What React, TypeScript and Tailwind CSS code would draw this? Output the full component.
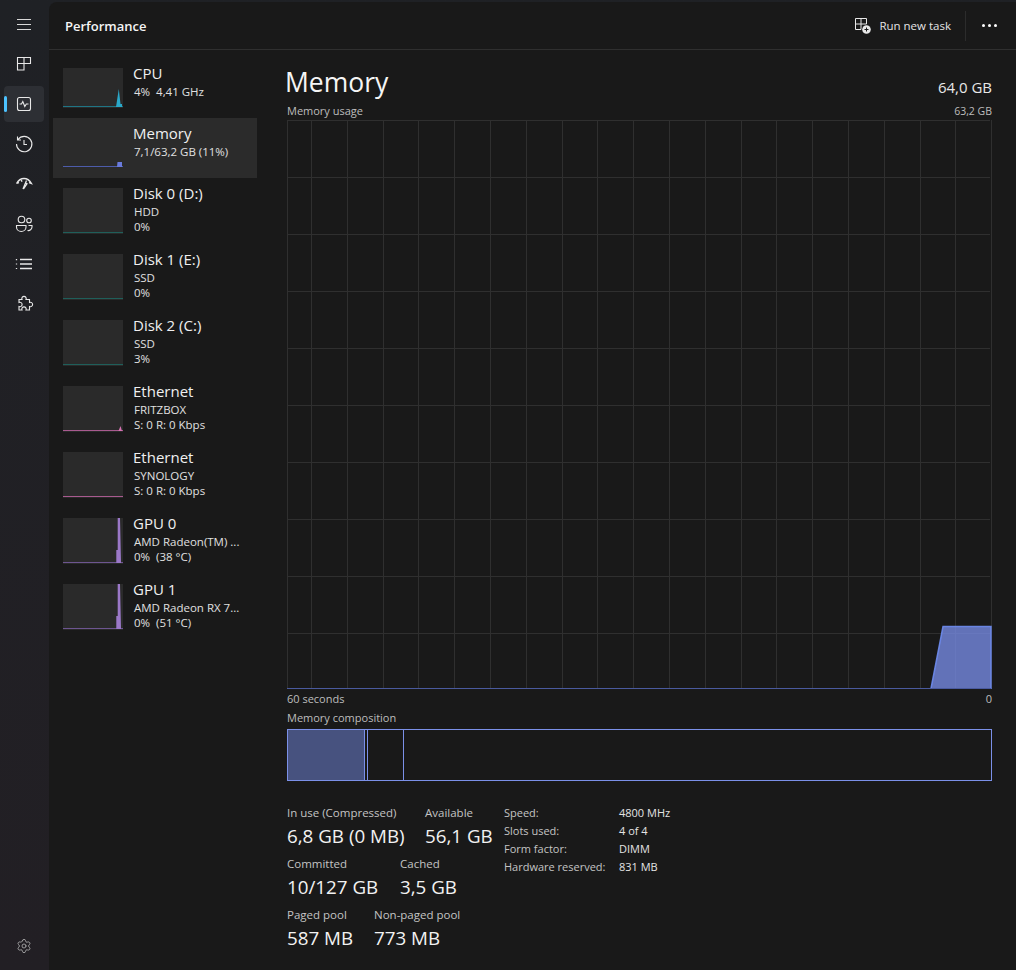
import { Settings } from 'lucide-react'

const font = { fontFamily: '"Open Sans", "Noto Sans", sans-serif' }

type Row = {
  name: string
  lines: string[]
  h: number
  color: string
  base: string
  shape?: string
  active?: boolean
}

const rows: Row[] = [
  { name: 'CPU', lines: ['4%  4,41 GHz'], h: 40, color: '#2aa8c9', base: '#1f7585', shape: '53,39 55.8,21 57.5,36 59,36 59,39' },
  { name: 'Memory', lines: ['7,1/63,2 GB (11%)'], h: 40, color: '#6a7bdc', base: '#4d5cab', shape: '54,39 54.500,34 59,34 59,39', active: true },
  { name: 'Disk 0 (D:)', lines: ['HDD', '0%'], h: 46, color: '#1f5f5a', base: '#1f5f5a' },
  { name: 'Disk 1 (E:)', lines: ['SSD', '0%'], h: 46, color: '#1f5f5a', base: '#1f5f5a' },
  { name: 'Disk 2 (C:)', lines: ['SSD', '3%'], h: 46, color: '#1f5f5a', base: '#1f5f5a' },
  { name: 'Ethernet', lines: ['FRITZBOX', 'S: 0 R: 0 Kbps'], h: 46, color: '#d873b4', base: '#a85a8f', shape: '55.500,45 57.500,40 59,45' },
  { name: 'Ethernet', lines: ['SYNOLOGY', 'S: 0 R: 0 Kbps'], h: 46, color: '#d873b4', base: '#a85a8f' },
  { name: 'GPU 0', lines: ['AMD Radeon(TM) ...', '0%  (38 °C)'], h: 46, color: '#9b78c8', base: '#6d5590', shape: '53.300,45 53.300,32 54.700,32 54.700,0 57,0 58,45' },
  { name: 'GPU 1', lines: ['AMD Radeon RX 7...', '0%  (51 °C)'], h: 46, color: '#9b78c8', base: '#6d5590', shape: '53.300,45 53.300,32 54.700,32 54.700,0 57,0 58,45' },
]

const verticals = Array.from({ length: 19 }, (_, i) => Math.round(24 + i * 35.8) + 0.5)
const horizontals = [0, 57, 114, 171, 228, 285, 342, 399, 456, 513]

function Thumb({ row }: { row: Row }) {
  return (
    <svg width={60} height={row.h} viewBox={`0 0 60 ${row.h}`} className={row.active ? 'bg-[#2b2b2b]' : 'bg-[#2a2a2a]'}>
      <rect x={0} y={row.h - 2} width={60} height={1} fill={row.base} />
      {row.shape && <polygon points={row.shape} fill={row.color} />}
    </svg>
  )
}

function NavIcon({ children, active }: { children: React.ReactNode; active?: boolean }) {
  return (
    <div className={`relative mx-[4px] my-[2px] flex h-[36px] w-[40px] items-center justify-center rounded-[4px] ${active ? 'bg-[#2d2f34]' : ''}`}>
      {active && <div className="absolute left-0 top-[10px] h-[16px] w-[3px] rounded-full bg-[#4cc2ff]" />}
      {children}
    </div>
  )
}

function Glyph({ children }: { children: React.ReactNode }) {
  return (
    <svg width={24} height={24} viewBox="0 0 24 24" fill="none" stroke="#e8e8e8" strokeWidth={1.1}>
      {children}
    </svg>
  )
}

function Stat({ label, value, width }: { label: string; value: string; width?: string }) {
  return (
    <div className={width}>
      <div className="text-[11.500px] leading-[16px] text-[#c4c4c4]">{label}</div>
      <div className="text-[18.800px] leading-[30px] text-[#f2f2f2] whitespace-nowrap">{value}</div>
    </div>
  )
}

export default function App() {
  return (
    <div style={font} className="flex h-[970px] w-[1016px] overflow-hidden bg-gradient-to-b from-[#1f2125] to-[#221f24] text-white">
      <aside className="flex w-[49px] shrink-0 flex-col justify-between pt-[4px] pb-[4px]">
        <div className="flex flex-col">
          <NavIcon>
            <svg width={24} height={24} viewBox="0 0 24 24" fill="none" stroke="#d8d8d8" strokeWidth={1}>
              <path d="M5 7.500h14M5 12.500h14M5 17.500h14" />
            </svg>
          </NavIcon>
          <NavIcon>
            <Glyph>
              <path d="M5.500 5.500h13v6h-6.500v6.500h-6.500zM5.500 11.500h6.500M12 5.500v6" />
            </Glyph>
          </NavIcon>
          <NavIcon active>
            <Glyph>
              <rect x={5.5} y={5.5} width={13} height={13} rx={2} />
              <path d="M7.500 12h2l1.300-2.500 2 5 1.500-2.500h2.200" />
            </Glyph>
          </NavIcon>
          <NavIcon>
            <Glyph>
              <path d="M6 7.500a7.700 7.700 0 1 1-1.500 4.500M5.500 4.500v3.500h3.500M12 8v4.500h3" />
            </Glyph>
          </NavIcon>
          <NavIcon>
            <Glyph>
              <path d="M4.500 11.500C6.500 8 9 6.500 12 6.500s5.500 1.500 7.500 5l-2.500-.8M4.500 11.500l2.500-.8M9 7.300l1 2.500M14.500 8.500l-3.500 8.500M13.500 11l1.500.8-3.500 5.200" strokeWidth={1.3} />
            </Glyph>
          </NavIcon>
          <NavIcon>
            <Glyph>
              <circle cx={9.5} cy={7.5} r={3.3} />
              <circle cx={17} cy={8.5} r={2.3} />
              <path d="M4.500 13.500h9.500v1.500a4.700 4.500 0 0 1-9.500 0zM16.500 13.500h3.500v1.500a3.700 3.700 0 0 1-4.500 3.500" />
            </Glyph>
          </NavIcon>
          <NavIcon>
            <Glyph>
              <path d="M8 7.500h12M8 12h12M8 16.500h12M4.500 7v1.200M4.500 11.400v1.200M4.500 15.900v1.200" strokeWidth={1.3} />
            </Glyph>
          </NavIcon>
          <NavIcon>
            <Glyph>
              <path d="M7 7.500h3a2.200 2.200 0 1 1 4 0h3.500v3a2.200 2.200 0 1 1 0 4v3.500h-3.500a2.200 2.200 0 1 0-4 0h-3v-3.500a2.200 2.200 0 1 0 0-4z" />
            </Glyph>
          </NavIcon>
        </div>
        <NavIcon>
          <Settings size={16} strokeWidth={1.2} color="#b5b5b5" />
        </NavIcon>
      </aside>

      <main className="mt-[2px] flex min-w-0 flex-1 flex-col rounded-tl-[8px] bg-[#191919]">
        <header className="flex h-[48px] shrink-0 items-center justify-between border-b border-[#2f2f2f] pl-[16px] pr-[18px]">
          <div className="text-[13px] font-semibold leading-[20px] text-[#f5f5f5]">Performance</div>
          <div className="flex items-center">
            <svg width={16} height={16} viewBox="0 0 16 16" fill="none" stroke="#e8e8e8" strokeWidth={1}>
              <path d="M.5.500h11v5.500h-5.500v5.500h-5.500zM.5 6h5.500M6 .5v5.500" />
              <circle cx={11.5} cy={11.5} r={4.3} fill="#e8e8e8" stroke="none" />
              <path d="M9.500 11.500h4M11.500 9.500v4" stroke="#191919" />
            </svg>
            <div className="ml-[8px] text-[11.500px] leading-[16px] text-[#e4e4e4]">Run new task</div>
            <div className="ml-[14px] h-[30px] w-px bg-[#2c2c2c]" />
            <div className="ml-[16px] flex w-[16px] gap-[3px]">
              <div className="h-[3px] w-[3px] rounded-full bg-white" />
              <div className="h-[3px] w-[3px] rounded-full bg-white" />
              <div className="h-[3px] w-[3px] rounded-full bg-white" />
            </div>
          </div>
        </header>

        <div className="flex min-h-0 flex-1">
          <nav className="ml-[4px] mt-[8px] w-[204px] shrink-0">
            {rows.map((row, i) => (
              <div key={i} className={`flex pl-[10px] ${row.active ? 'bg-[#2b2b2b]' : ''} ${row.lines.length === 1 ? 'h-[60px]' : 'h-[66px]'}`}>
                <div className="mr-[10px] mt-[10px] shrink-0">
                  <Thumb row={row} />
                </div>
                <div className="mt-[5px] min-w-0 whitespace-pre">
                  <div className="text-[15px] leading-[21px] text-[#f0f0f0]">{row.name}</div>
                  {row.lines.map((line) => (
                    <div key={line} className="pl-px text-[11.500px] leading-[15px] text-[#e0e0e0]">
                      {line}
                    </div>
                  ))}
                </div>
              </div>
            ))}
          </nav>

          <section className="ml-[29px] w-[706px] shrink-0 pt-[14px]">
            <div className="flex items-end justify-between">
              <div className="-ml-px text-[26.500px] leading-[36px] text-[#f5f5f5]">Memory</div>
              <div className="text-[15px] leading-[20px] mb-[3px] text-[#e8e8e8]">64,0 GB</div>
            </div>
            <div className="flex h-[20px] items-end justify-between pl-[1px] text-[11px] leading-[18px] text-[#bdbdbd]">
              <span>Memory usage</span>
              <span className="text-[10.500px]">63,2 GB</span>
            </div>
            <svg width={705} height={570} viewBox="0 -1 705 570" className="ml-[1px] block">
              {horizontals.map((y) => (
                <line key={y} x1={0} x2={703} y1={y - 0.5} y2={y - 0.5} stroke="#2f2f2f" />
              ))}
              {verticals.map((x) => (
                <line key={x} x1={x} x2={x} y1={-1} y2={568} stroke="#2f2f2f" />
              ))}
              <line x1={0.5} x2={0.5} y1={-1} y2={568} stroke="#2f2f2f" />
              <line x1={704.5} x2={704.5} y1={-1} y2={568} stroke="#2f2f2f" />
              <polygon points="644,568 656,505.500 704,505.500 704,568" fill="#7b90ee" fillOpacity={0.75} />
              <path d="M644 567.500L656 505.500H704V568" fill="none" stroke="#6e8cf0" strokeOpacity={0.9} strokeWidth={1.5} />
              <line x1={0} x2={704} y1={567.5} y2={567.5} stroke="#4a5a9e" />
            </svg>
            <div className="flex justify-between pl-[1px] text-[11px] leading-[18px] text-[#bdbdbd]">
              <span>60 seconds</span>
              <span>0</span>
            </div>
            <div className="h-[21px] pl-[1px] text-[11px] leading-[19px] text-[#bdbdbd]">Memory composition</div>
            <div className="ml-[1px] flex h-[52px] w-[705px] border border-[#7b90e8]">
              <div className="w-[77px] border-r border-[#7b90e8] bg-[#47527f]" />
              <div className="w-[3px] border-r border-[#7b90e8]" />
              <div className="w-[36px] border-r border-[#7b90e8]" />
            </div>

            <div className="ml-[1px] mt-[24px] flex items-start">
              <div className="flex w-[217px] shrink-0 flex-col gap-[5px]">
                <div className="flex">
                  <Stat label="In use (Compressed)" value="6,8 GB (0 MB)" width="w-[138px] shrink-0" />
                  <Stat label="Available" value="56,1 GB" />
                </div>
                <div className="flex">
                  <Stat label="Committed" value="10/127 GB" width="w-[113px] shrink-0" />
                  <Stat label="Cached" value="3,5 GB" />
                </div>
                <div className="flex">
                  <Stat label="Paged pool" value="587 MB" width="w-[87px] shrink-0" />
                  <Stat label="Non-paged pool" value="773 MB" />
                </div>
              </div>
              <div className="-mt-px grid grid-cols-[115px_1fr] text-[11px] leading-[18px]">
                <span className="text-[#c4c4c4]">Speed:</span>
                <span className="text-[#e4e4e4]">4800 MHz</span>
                <span className="text-[#c4c4c4]">Slots used:</span>
                <span className="text-[#e4e4e4]">4 of 4</span>
                <span className="text-[#c4c4c4]">Form factor:</span>
                <span className="text-[#e4e4e4]">DIMM</span>
                <span className="text-[#c4c4c4]">Hardware reserved:</span>
                <span className="text-[#e4e4e4]">831 MB</span>
              </div>
            </div>
          </section>
        </div>
      </main>
    </div>
  )
}
